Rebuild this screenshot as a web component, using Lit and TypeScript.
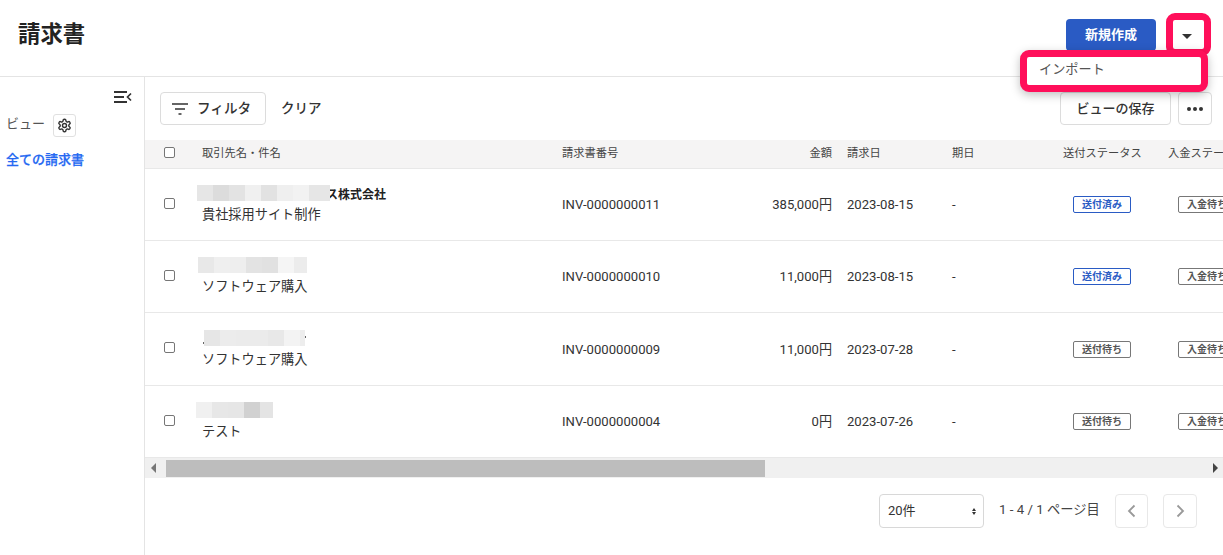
import { LitElement, html, css, svg } from "lit";
import { customElement } from "lit/decorators.js";

type Row = { blocks: string[]; last: number; offset: number; suffix?: string; dots?: boolean; subject: string; no: string; amount: string; date: string; sent: boolean };

const rows: Row[] = [
  { blocks: ["#e6e6e6", "#dcdcdc", "#e3e3e3", "#f0f0f0", "#e2e2e2", "#efefef", "#f2f2f2", "#e6e6e6"], last: 21, offset: 0, suffix: "ス株式会社", subject: "貴社採用サイト制作", no: "INV-0000000011", amount: "385,000円", date: "2023-08-15", sent: true },
  { blocks: ["#e8e8e8", "#efefef", "#eeeeee", "#e3e3e3", "#e1e1e1", "#f5f5f5", "#ececec"], last: 13, offset: 1, subject: "ソフトウェア購入", no: "INV-0000000010", amount: "11,000円", date: "2023-08-15", sent: true },
  { blocks: ["#e6e6e6", "#ececec", "#ebebeb", "#ebebeb", "#e8e8e8", "#f3f3f3", "#ededed"], last: 5, offset: 7, dots: true, subject: "ソフトウェア購入", no: "INV-0000000009", amount: "11,000円", date: "2023-07-28", sent: false },
  { blocks: ["#f0f0f0", "#e7e7e7", "#e6e6e6", "#d1d1d1", "#e4e4e4"], last: 13, offset: -1, subject: "テスト", no: "INV-0000000004", amount: "0円", date: "2023-07-26", sent: false },
];

const gear = svg`<svg width="15" height="15" viewBox="0 0 24 24" fill="none" stroke="#333" stroke-width="2.3" stroke-linejoin="round"><path d="M12.22 2h-.44a2 2 0 0 0-2 2v.18a2 2 0 0 1-1 1.73l-.43.25a2 2 0 0 1-2 0l-.15-.08a2 2 0 0 0-2.73.73l-.22.38a2 2 0 0 0 .73 2.73l.15.1a2 2 0 0 1 1 1.72v.51a2 2 0 0 1-1 1.74l-.15.09a2 2 0 0 0-.73 2.73l.22.38a2 2 0 0 0 2.73.73l.15-.08a2 2 0 0 1 2 0l.43.25a2 2 0 0 1 1 1.73V20a2 2 0 0 0 2 2h.44a2 2 0 0 0 2-2v-.18a2 2 0 0 1 1-1.73l.43-.25a2 2 0 0 1 2 0l.15.08a2 2 0 0 0 2.73-.73l.22-.39a2 2 0 0 0-.73-2.73l-.15-.08a2 2 0 0 1-1-1.74v-.5a2 2 0 0 1 1-1.74l.15-.09a2 2 0 0 0 .73-2.73l-.22-.38a2 2 0 0 0-2.73-.73l-.15.08a2 2 0 0 1-2 0l-.43-.25a2 2 0 0 1-1-1.73V4a2 2 0 0 0-2-2z"/><circle cx="12" cy="12" r="3.2"/></svg>`;

@customElement("app-root")
export class AppRoot extends LitElement {
  static styles = css`
    :host { display: block; width: 1223px; height: 555px; overflow: hidden; position: relative; background: #fff; color: #333; font-family: Roboto, "Noto Sans CJK JP", sans-serif; font-size: 13px; }
    * { box-sizing: border-box; }
    button { font-family: inherit; background: #fff; cursor: pointer; }
    .header { height: 77px; border-bottom: 1px solid #e4e4e4; display: flex; align-items: flex-start; padding: 19px 20px 0 18px; }
    h1 { margin: 0; font-size: 22.4px; line-height: 30px; font-weight: 700; color: #222; flex: 1; }
    .create { width: 90px; height: 32px; border: none; border-radius: 4px; background: #2a5bc4; color: #fff; font-size: 13px; font-weight: 700; margin-right: 15px; padding: 0 0 4px; }
    .caret { width: 32px; height: 32px; border: none; display: flex; align-items: center; justify-content: center; padding: 3px 0 0; }
    .caret i { display: block; width: 0; height: 0; border: 5px solid transparent; border-top: 5px solid #333; border-bottom: 0; }
    .body { display: flex; height: 478px; }
    .side { width: 145px; flex: none; border-right: 1px solid #e4e4e4; padding: 14px 12px 0 6px; display: flex; flex-direction: column; }
    .collapse { align-self: flex-end; display: block; }
    .view { display: flex; align-items: center; gap: 8px; margin-top: 11px; color: #555; font-size: 13px; height: 23px; }
    .view span:first-child { line-height: 16px; padding-bottom: 4px; }
    .gear { width: 23px; height: 23px; border: 1px solid #e0e0e0; border-radius: 3px; display: flex; align-items: center; justify-content: center; }
    .all { color: #2468f2; font-size: 13px; font-weight: 500; -webkit-text-stroke: 0.25px #2468f2; margin-top: 14px; line-height: 18px; }
    .main { flex: 1; min-width: 0; display: flex; flex-direction: column; }
    .toolbar { height: 63px; flex: none; display: flex; align-items: flex-start; padding: 15px 11px 0 15px; }
    .filter { width: 106px; height: 33px; border: 1px solid #dcdcdc; border-radius: 4px; display: flex; align-items: center; gap: 9px; padding: 0 0 3px 11px; font-size: 13.6px; font-weight: 500; color: #333; }
    .filter svg { margin-top: 3px; }
    .clear { margin-left: 15px; font-size: 13.5px; font-weight: 500; line-height: 33px; flex: 1; color: #333; }
    .save { width: 111px; height: 33px; border: 1px solid #dcdcdc; border-radius: 4px; font-size: 13px; font-weight: 500; color: #333; padding: 0 0 3px; }
    .more { width: 34px; height: 33px; margin-left: 7px; border: 1px solid #dcdcdc; border-radius: 4px; display: flex; align-items: center; justify-content: center; gap: 2px; padding: 0; }
    .more i { width: 4px; height: 4px; border-radius: 50%; background: #333; }
    .table { overflow: hidden; flex: none; }
    .tr { display: grid; grid-template-columns: 57px 360px 170px 100px 120px 111px 105px 200px; align-items: center; }
    .thead { height: 29px; background: #f5f4f4; border-bottom: 1px solid #e8e8e8; font-size: 11.25px; color: #444; padding-bottom: 4px; }
    .row { height: 72px; border-bottom: 1px solid #e8e8e8; font-size: 13.1px; color: #333; }
    .row:nth-child(4) { height: 73px; }
    .row:last-child { height: 71px; border-bottom: none; }
    .cb { width: 11px; height: 11px; margin-left: 19px; border: 1px solid #767676; border-radius: 2px; background: #fff; }
    .row .cb { margin-bottom: 3px; }
    .right { text-align: right; }
    .pad { padding-left: 15px; }
    .name { display: flex; flex-direction: column; gap: 2px; }
    .line1 { display: flex; align-items: center; height: 18px; font-weight: 700; font-size: 12px; color: #222; }
    .blocks { display: flex; position: relative; z-index: 1; align-items: center; }
    .blocks span { width: 16px; height: 16px; flex: none; }
    .suffix { margin-left: -4px; }
    .dot { width: 1px; height: 2px; background: #666; flex: none; }
    .dot-l { margin-left: -1px; align-self: flex-end; margin-bottom: 2px; }
    .dot-r { align-self: flex-start; margin-top: 7px; }
    .subject { line-height: 20px; font-size: 13.2px; color: #333; margin-top: 1px; }
    .amount { padding-bottom: 2px; }
    .badge { display: flex; align-items: center; justify-content: center; width: 58px; height: 17px; margin-left: 10px; border: 1px solid #777; border-radius: 2px; color: #555; font-size: 10px; font-weight: 700; white-space: nowrap; overflow: hidden; background: #fff; padding-bottom: 2px; }
    .badge.sent { border-color: #2a5bc4; color: #2a5bc4; }
    .scroll { height: 21px; flex: none; background: #f0f0f0; border-top: 1px solid #e8e8e8; display: flex; align-items: center; padding-right: 5px; }
    .arrow { width: 21px; display: flex; justify-content: center; flex: none; padding-right: 4px; }
    .arrow i { border: 5px solid transparent; border-left: 0; border-right: 5px solid #777; }
    .thumb { width: 599px; height: 17px; background: #bdbdbd; flex: none; }
    .spacer { flex: 1; }
    .arrow-r { border: 5px solid transparent; border-right: 0; border-left: 5px solid #444; }
    .pager { flex: 1; display: flex; align-items: flex-start; padding: 16px 0 0 734px; }
    .select { width: 105px; height: 34px; border: 1px solid #d8d8d8; border-radius: 4px; display: flex; align-items: center; justify-content: space-between; padding: 0 7px 3px 8px; font-size: 13px; }
    .updown { display: flex; flex-direction: column; gap: 1px; padding-top: 3px; }
    .updown i { border: 2.5px solid transparent; }
    .updown i:first-child { border-top: 0; border-bottom: 3px solid #333; }
    .updown i:last-child { border-bottom: 0; border-top: 3px solid #333; }
    .count { margin-left: 15px; line-height: 32px; font-size: 13.25px; color: #444; width: 116px; white-space: nowrap; }
    .nav { width: 33px; height: 34px; border: 1px solid #e8e8e8; border-radius: 4px; display: flex; align-items: center; justify-content: center; padding: 0; }
    .nav + .nav { margin-left: 15px; width: 34px; }
    .mark { position: absolute; border: 7px solid #ff0f5a; border-radius: 9px; pointer-events: none; }
    .mark-caret { left: 1166px; top: 13px; width: 45px; height: 43px; }
    .menu { position: absolute; left: 1020px; top: 50px; width: 188px; height: 42px; background: #fff; border: 7px solid #ff0f5a; border-radius: 9px; box-shadow: 0 3px 10px rgba(0,0,0,.25); padding-left: 12px; font-size: 13.2px; line-height: 26px; color: #555; }
  `;

  render() {
    return html`
      <div class="header">
        <h1>請求書</h1>
        <button class="create">新規作成</button>
        <button class="caret"><i></i></button>
      </div>
      <div class="body">
        <aside class="side">
          <svg class="collapse" width="18" height="12" viewBox="0 0 18 12" fill="none" stroke="#333"><path d="M0 1h13M0 6h10M0 11h13" stroke-width="2"/><path d="M17 2.500L13.500 6l3.500 3.500" stroke-width="1.700"/></svg>
          <div class="view"><span>ビュー</span><span class="gear">${gear}</span></div>
          <div class="all">全ての請求書</div>
        </aside>
        <main class="main">
          <div class="toolbar">
            <button class="filter">
              <svg width="16" height="12" viewBox="0 0 16 12" fill="none" stroke="#333" stroke-width="1.6"><path d="M0 1h16M3 6h10M6.500 11h3"/></svg>
              <span>フィルタ</span>
            </button>
            <div class="clear">クリア</div>
            <button class="save">ビューの保存</button>
            <button class="more"><i></i><i></i><i></i></button>
          </div>
          <div class="table">
            <div class="tr thead">
              <div class="cb"></div>
              <div>取引先名・件名</div>
              <div>請求書番号</div>
              <div class="right">金額</div>
              <div class="pad">請求日</div>
              <div>期日</div>
              <div>送付ステータス</div>
              <div>入金ステータス</div>
            </div>
            ${rows.map(r => html`
              <div class="tr row">
                <div class="cb"></div>
                <div class="name">
                  <div class="line1">
                    <div class="blocks" style="margin-left:${r.offset - 5}px">${r.dots ? html`<i class="dot dot-l"></i>` : ""}${r.blocks.map((c, i) => html`<span style="background:${c};${i === r.blocks.length - 1 ? `width:${r.last}px` : ""}"></span>`)}</div>
                    ${r.suffix ? html`<span class="suffix">${r.suffix}</span>` : ""}
                    ${r.dots ? html`<i class="dot dot-r"></i>` : ""}
                  </div>
                  <div class="subject">${r.subject}</div>
                </div>
                <div class="no">${r.no}</div>
                <div class="amount right">${r.amount}</div>
                <div class="date pad">${r.date}</div>
                <div>-</div>
                <div><span class="badge ${r.sent ? "sent" : ""}">${r.sent ? "送付済み" : "送付待ち"}</span></div>
                <div><span class="badge">入金待ち</span></div>
              </div>`)}
          </div>
          <div class="scroll">
            <div class="arrow"><i></i></div>
            <div class="thumb"></div>
            <div class="spacer"></div>
            <i class="arrow-r"></i>
          </div>
          <div class="pager">
            <div class="select"><span>20件</span><span class="updown"><i></i><i></i></span></div>
            <div class="count">1 - 4 / 1 ページ目</div>
            <button class="nav"><svg width="9" height="14" viewBox="0 0 9 14" fill="none" stroke="#999" stroke-width="1.8"><path d="M7.500 1.500L2 7l5.500 5.500"/></svg></button>
            <button class="nav"><svg width="9" height="14" viewBox="0 0 9 14" fill="none" stroke="#999" stroke-width="1.8"><path d="M1.500 1.500L7 7l-5.500 5.500"/></svg></button>
          </div>
        </main>
      </div>
      <div class="mark mark-caret"></div>
      <div class="menu">インポート</div>
    `;
  }
}
